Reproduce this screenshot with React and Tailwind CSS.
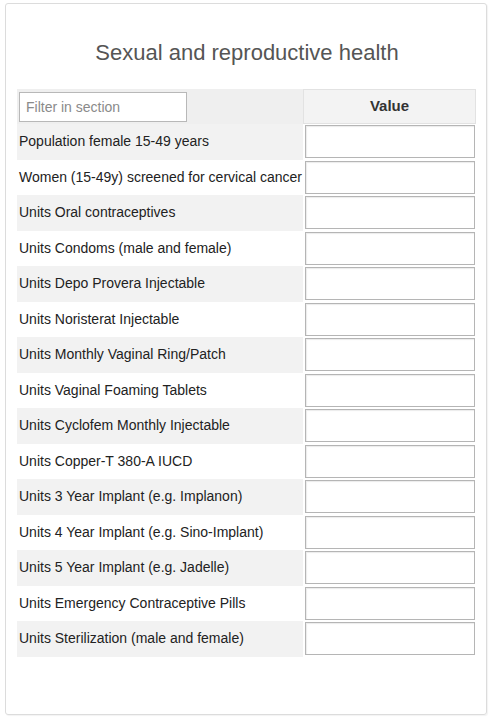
import React, { useState } from "react";

const rows = [
  "Population female 15-49 years",
  "Women (15-49y) screened for cervical cancer",
  "Units Oral contraceptives",
  "Units Condoms (male and female)",
  "Units Depo Provera Injectable",
  "Units Noristerat Injectable",
  "Units Monthly Vaginal Ring/Patch",
  "Units Vaginal Foaming Tablets",
  "Units Cyclofem Monthly Injectable",
  "Units Copper-T 380-A IUCD",
  "Units 3 Year Implant (e.g. Implanon)",
  "Units 4 Year Implant (e.g. Sino-Implant)",
  "Units 5 Year Implant (e.g. Jadelle)",
  "Units Emergency Contraceptive Pills",
  "Units Sterilization (male and female)",
];

function App() {
  const [filter, setFilter] = useState("");
  const [values, setValues] = useState({});

  const visible = rows.filter((r) =>
    r.toLowerCase().includes(filter.toLowerCase())
  );

  return (
    <div className="bg-white w-[496px] h-[723px] pt-[3px] pl-[5px] font-['Liberation_Sans',Arial,sans-serif]">
      <div className="w-[482px] h-[712px] border border-[#dcdcdc] rounded-[3px] shadow-[1px_1px_1px_rgba(0,0,0,0.05)] pl-[11px] pr-[9px]">
        <h2 className="text-center text-[22px] text-[#555] leading-[26px] pt-[36px] pb-[23px]">
          Sexual and reproductive health
        </h2>

        <div className="w-[459px]">
          {/* header */}
          <div className="flex h-[35px] bg-[#efefef]">
            <div className="w-[286px] flex items-center pl-[2px]">
              <input
                value={filter}
                onChange={(e) => setFilter(e.target.value)}
                placeholder="Filter in section"
                className="w-[168px] h-[30px] bg-white border border-[#b8b8b8] px-[6px] text-[14px] text-[#333] placeholder:text-[#8a8a8a] outline-none"
              />
            </div>
            <div className="flex-1 flex items-center justify-center bg-[#f3f3f3] border border-[#e2e2e2] text-[15px] font-bold text-[#333]">
              Value
            </div>
          </div>

          {/* rows */}
          {visible.map((label, i) => (
            <div
              key={label}
              className={`flex h-[35.5px] items-center ${
                i % 2 === 0 ? "bg-[#f2f2f2]" : "bg-white"
              }`}
            >
              <div className="w-[286px] pl-[2px] text-[14px] text-[#222] whitespace-nowrap">
                {label}
              </div>
              <div className="flex-1 h-full bg-white flex items-center pl-[2px] pr-[1px]">
                <input
                  value={values[label] || ""}
                  onChange={(e) =>
                    setValues({ ...values, [label]: e.target.value })
                  }
                  className="w-full h-[33px] bg-white border border-[#b5b5b5] shadow-[inset_1px_1px_1px_rgba(0,0,0,0.08)] outline-none px-[4px] text-[14px]"
                />
              </div>
            </div>
          ))}
        </div>
      </div>
    </div>
  );
}

export default App;
